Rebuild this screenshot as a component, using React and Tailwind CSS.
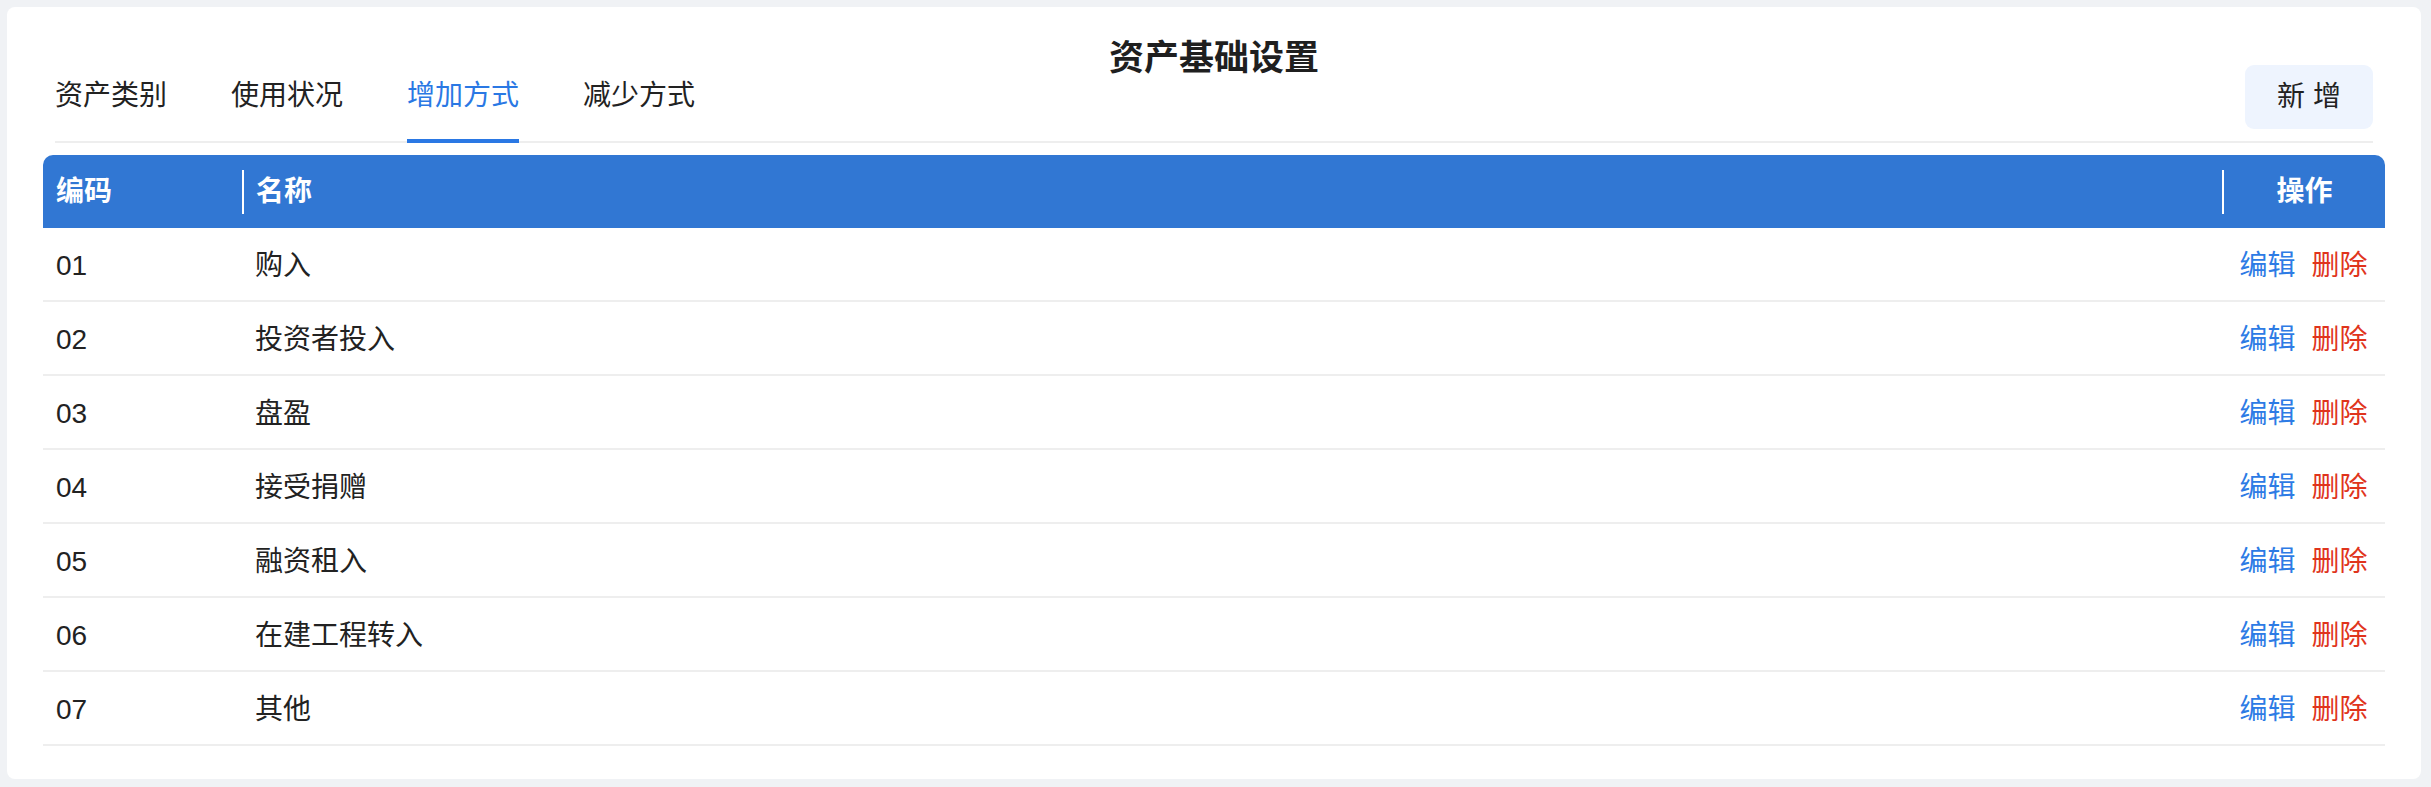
import React from "react";

const tabs = ["资产类别", "使用状况", "增加方式", "减少方式"];
const rows = [
  ["01", "购入"],
  ["02", "投资者投入"],
  ["03", "盘盈"],
  ["04", "接受捐赠"],
  ["05", "融资租入"],
  ["06", "在建工程转入"],
  ["07", "其他"],
];

export default function App() {
  return (
    <div className="min-h-screen bg-[#f0f2f5] pt-[7px] pl-[7px] pr-[10px] pb-[9px] font-['Liberation_Sans','Noto_Sans_CJK_SC',sans-serif] text-[#222222]">
      <div className="relative rounded-[8px] bg-white px-[36px] pt-[58px] pb-[33px]">
        <div className="absolute left-0 right-0 top-[30px] text-center text-[35px] font-bold leading-[42px] text-[#1f1f1f]">
          资产基础设置
        </div>
        <div className="mx-[12px] flex items-end justify-between border-b-2 border-[#eeeeee]">
          <div className="flex gap-[64px]">
            {tabs.map((t, i) => (
              <div
                key={t}
                className={
                  i === 2
                    ? "-mb-[2px] border-b-4 border-[#2a78e4] pb-[23px] text-[28px] leading-[40px] text-[#2a78e4]"
                    : "-mb-[2px] border-b-4 border-transparent pb-[23px] text-[28px] leading-[40px] text-[#222222]"
                }
              >
                {t}
              </div>
            ))}
          </div>
          <button className="mb-[12px] flex h-[64px] w-[128px] items-center justify-center rounded-[9px] bg-[#eef4fe] text-[28px] text-[#222222]">
            新 增
          </button>
        </div>
        <div className="mt-[12px]">
          <div className="grid h-[73px] grid-cols-[199px_1fr_163px] rounded-t-[10px] bg-[#3177d3] text-[28px] font-bold text-white">
            <div className="flex items-center pl-[13px]">编码</div>
            <div className="flex items-center">
              <div className="h-[44px] w-[2px] bg-white" />
              <span className="ml-[12px]">名称</span>
            </div>
            <div className="flex items-center">
              <div className="h-[44px] w-[2px] bg-white" />
              <span className="flex-1 text-center">操作</span>
            </div>
          </div>
          {rows.map(([code, name]) => (
            <div
              key={code}
              className="grid h-[74px] grid-cols-[199px_1fr_163px] border-b-2 border-[#eeeeee] pt-[3px] text-[28px]"
            >
              <div className="flex items-center pl-[13px]">{code}</div>
              <div className="flex items-center pl-[13px]">{name}</div>
              <div className="flex items-center justify-center gap-[16px]">
                <span className="text-[#2d7be5]">编辑</span>
                <span className="text-[#e0341c]">删除</span>
              </div>
            </div>
          ))}
        </div>
      </div>
    </div>
  );
}
